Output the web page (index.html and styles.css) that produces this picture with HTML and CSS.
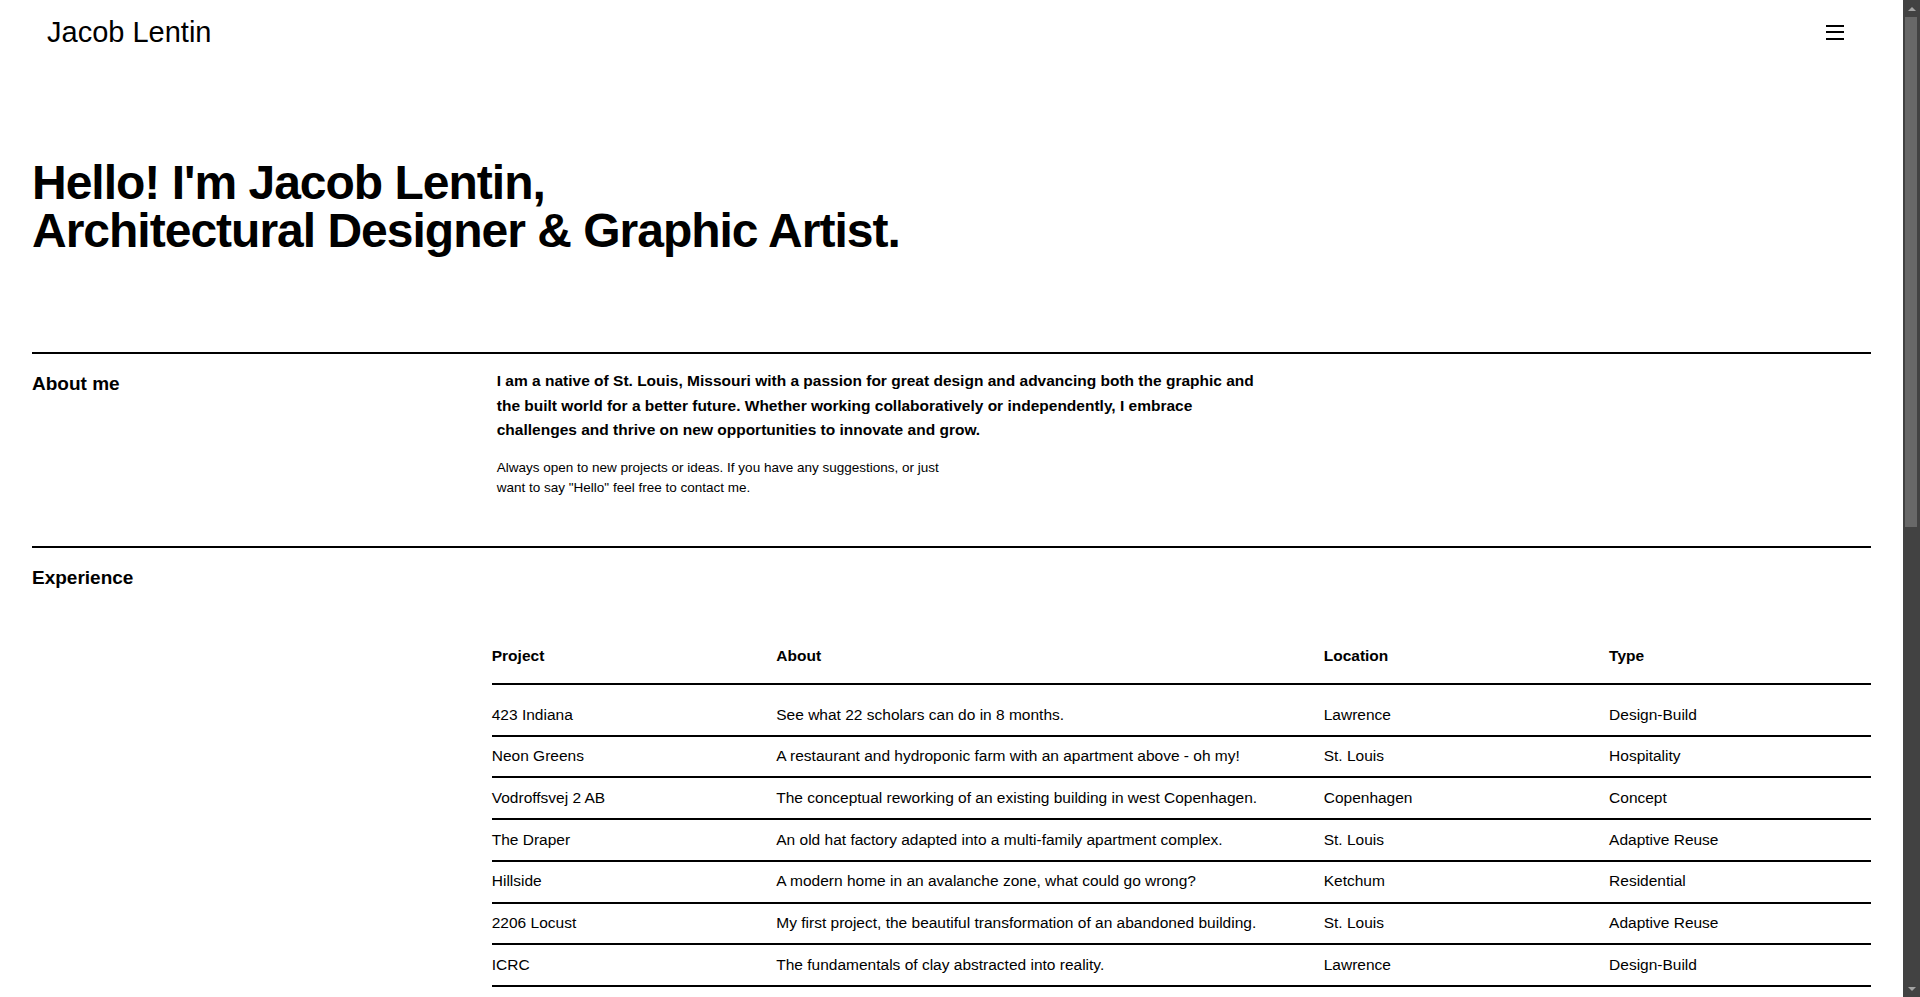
FILE: index.html
```html
<!DOCTYPE html>
<html lang="en">
<head>
<meta charset="utf-8">
<title>Jacob Lentin</title>
<link rel="stylesheet" href="styles.css">
</head>
<body>
<header class="site-header">
  <a class="logo" href="#">Jacob Lentin</a>
  <button class="menu-btn" aria-label="Menu"><span></span><span></span><span></span></button>
</header>
<main class="page">
  <h1 class="hero">Hello! I'm Jacob Lentin,<br>Architectural Designer &amp; Graphic Artist.</h1>

  <section class="section about">
    <h2 class="section-title">About me</h2>
    <div class="about-body">
      <p class="lead">I am a native of St. Louis, Missouri with a passion for great design and advancing both the graphic and the built world for a better future. Whether working collaboratively or independently, I embrace challenges and thrive on new opportunities to innovate and grow.</p>
      <p class="note">Always open to new projects or ideas. If you have any suggestions, or just want to say "Hello" feel free to contact me.</p>
    </div>
  </section>

  <section class="section experience">
    <h2 class="section-title">Experience</h2>
    <table class="exp-table">
      <colgroup>
        <col class="c-project"><col class="c-about"><col class="c-location"><col class="c-type">
      </colgroup>
      <thead>
        <tr><th>Project</th><th>About</th><th>Location</th><th>Type</th></tr>
      </thead>
      <tbody>
        <tr><td>423 Indiana</td><td>See what 22 scholars can do in 8 months.</td><td>Lawrence</td><td>Design-Build</td></tr>
        <tr><td>Neon Greens</td><td>A restaurant and hydroponic farm with an apartment above - oh my!</td><td>St. Louis</td><td>Hospitality</td></tr>
        <tr><td>Vodroffsvej 2 AB</td><td>The conceptual reworking of an existing building in west Copenhagen.</td><td>Copenhagen</td><td>Concept</td></tr>
        <tr><td>The Draper</td><td>An old hat factory adapted into a multi-family apartment complex.</td><td>St. Louis</td><td>Adaptive Reuse</td></tr>
        <tr><td>Hillside</td><td>A modern home in an avalanche zone, what could go wrong?</td><td>Ketchum</td><td>Residential</td></tr>
        <tr><td>2206 Locust</td><td>My first project, the beautiful transformation of an abandoned building.</td><td>St. Louis</td><td>Adaptive Reuse</td></tr>
        <tr><td>ICRC</td><td>The fundamentals of clay abstracted into reality.</td><td>Lawrence</td><td>Design-Build</td></tr>
      </tbody>
    </table>
  </section>
</main>
<div class="scrollbar" aria-hidden="true">
  <span class="sb-btn sb-up"></span>
  <span class="sb-track"><span class="sb-thumb"></span></span>
  <span class="sb-btn sb-down"></span>
</div>
</body>
</html>
```

FILE: styles.css
```css
html, body {
  margin: 0;
  padding: 0;
}

body {
  font-family: "Liberation Sans", Arial, Helvetica, sans-serif;
  color: #000;
  background: #fff;
  padding-right: 17px;
}

/* window scrollbar (drawn, since the capture hides native ones) */
.scrollbar {
  position: fixed;
  top: 0;
  right: 0;
  width: 17px;
  height: 100vh;
  background: #424242;
  display: flex;
  flex-direction: column;
}

.sb-btn {
  flex: none;
  height: 17px;
  display: flex;
  align-items: center;
  justify-content: center;
}

.sb-up::before,
.sb-down::before {
  content: "";
  width: 0;
  height: 0;
  border-left: 4px solid transparent;
  border-right: 4px solid transparent;
}

.sb-up::before {
  border-bottom: 4px solid #a3a3a3;
}

.sb-down::before {
  border-top: 4px solid #a3a3a3;
}

.sb-track {
  flex: 1;
  padding: 0 3px 0 2px;
}

.sb-thumb {
  display: block;
  height: 510px;
  background: #686868;
}

.site-header {
  display: flex;
  align-items: center;
  justify-content: space-between;
  height: 64px;
  padding: 0 59px 0 47px;
}

.logo {
  font-size: 29px;
  line-height: 1;
  color: #000;
  text-decoration: none;
}

.menu-btn {
  display: flex;
  flex-direction: column;
  justify-content: space-between;
  width: 18px;
  height: 15px;
  padding: 0;
  border: 0;
  background: none;
  cursor: pointer;
}

.menu-btn span {
  display: block;
  height: 2px;
  background: #000;
}

.page {
  padding: 0 32px 60px;
}

.hero {
  margin: 95px 0 0;
  font-size: 48px;
  line-height: 48px;
  font-weight: 700;
  letter-spacing: -1px;
}

.section {
  border-top: 2px solid #000;
  padding-top: 15px;
}

.section-title {
  margin: 4px 0 0;
  font-size: 19px;
  line-height: 1.2;
  font-weight: 700;
}

.about {
  margin-top: 97px;
  display: grid;
  grid-template-columns: 25% 75%;
  padding-bottom: 49px;
}

.about-body {
  padding-left: 5px;
}

.lead {
  margin: 0;
  max-width: 770px;
  font-size: 15.5px;
  line-height: 24.5px;
  font-weight: 700;
}

.note {
  margin: 15.5px 0 0;
  max-width: 460px;
  font-size: 13.5px;
  line-height: 19.6px;
}

.exp-table {
  margin: 53.6px 0 0 25%;
  width: 75%;
  border-collapse: collapse;
  table-layout: fixed;
  font-size: 15.5px;
  line-height: 24.5px;
}

.c-project { width: 20.63%; }
.c-about { width: 39.69%; }
.c-location { width: 20.69%; }

.exp-table th {
  text-align: left;
  font-weight: 700;
  padding: 0 0 15px;
  border-bottom: 2px solid #000;
}

.exp-table td {
  padding: 7.6px 0;
  border-bottom: 2px solid #000;
  white-space: nowrap;
}

.exp-table tbody tr:first-child td {
  padding-top: 17.6px;
}
```
